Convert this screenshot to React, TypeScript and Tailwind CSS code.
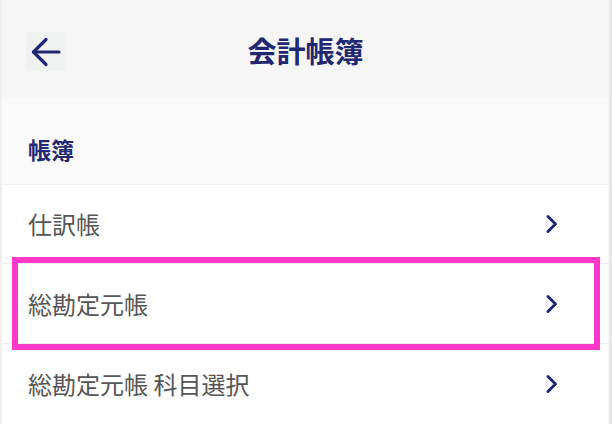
import React from 'react';

const items = ['仕訳帳', '総勘定元帳', '総勘定元帳 科目選択'];

function Chevron() {
  return (
    <svg width="14" height="20" viewBox="0 0 14 20" fill="none" stroke="#1f2870" strokeWidth={3} strokeLinecap="round" strokeLinejoin="round">
      <path d="M3 2.5 L10.5 10 L3 17.5" />
    </svg>
  );
}

export default function App() {
  return (
    <div
      className="w-[612px] h-[424px] overflow-hidden bg-white border-l-2 border-l-[#efefef] border-r-[3px] border-r-[#e6e6e6]"
      style={{ fontFamily: '"Noto Sans CJK JP", "Noto Sans", sans-serif' }}
    >
      {/* Header */}
      <div className="relative h-[97px] bg-[#f6f6f6] flex items-center justify-center">
        <div className="absolute left-[24px] top-[32px] w-[39px] h-[39px] bg-[#f0f1f1] flex items-center justify-center">
          <svg width="30" height="30" viewBox="0 0 30 30" fill="none" stroke="#1f2870" strokeWidth={3.2} strokeLinecap="round" strokeLinejoin="round">
            <path d="M2.5 15 H28" />
            <path d="M15 2.5 L2.5 15 L15 27.5" />
          </svg>
        </div>
        <h1 className="text-[29px] font-bold text-[#1f2870] leading-none mt-[3px]">会計帳簿</h1>
      </div>

      {/* Section header */}
      <div className="h-[87px] bg-[#fafafa] flex items-center pl-[26px] pt-[18px]">
        <span className="text-[23px] font-bold text-[#1f2870] leading-none">帳簿</span>
      </div>

      {/* List */}
      <div className="flex flex-col border-t border-[#f2f2f2]">
        {items.map((label, idx) => (
          <div
            key={idx}
            className={`relative flex items-center justify-between pl-[26px] pr-[50px] ${idx === 0 ? 'h-[79px] border-b border-[#ececec]' : idx === 1 ? 'h-[80px] border-b border-[#ececec]' : 'h-[80px]'}`}
          >
            <span className="text-[24px] text-[#555555] leading-none">{label}</span>
            <Chevron />
            {idx === 1 && (
              <div className="absolute left-[10px] right-[9px] -top-[7px] -bottom-[7px] border-[6px] border-[#ff38c8]" />
            )}
          </div>
        ))}
      </div>
    </div>
  );
}
